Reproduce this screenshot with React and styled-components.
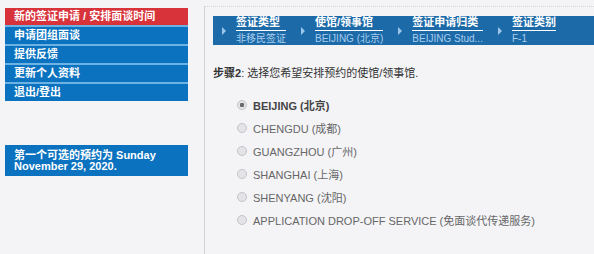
import React from 'react'
import styled, { createGlobalStyle } from 'styled-components'

const menu = [
  '新的签证申请 / 安排面谈时间',
  '申请团组面谈',
  '提供反馈',
  '更新个人资料',
  '退出/登出',
]

const crumbs = [
  { label: '签证类型', value: '非移民签证' },
  { label: '使馆/领事馆', value: 'BEIJING (北京)' },
  { label: '签证申请归类', value: 'BEIJING Stud...' },
  { label: '签证类别', value: 'F-1' },
]

const posts = [
  'BEIJING (北京)',
  'CHENGDU (成都)',
  'GUANGZHOU (广州)',
  'SHANGHAI (上海)',
  'SHENYANG (沈阳)',
  'APPLICATION DROP-OFF SERVICE (免面谈代传递服务)',
]

function App() {
  return (
    <>
      <GlobalStyle />
      <SCPage>
        <SCSidebar>
          <SCMenu>
            {menu.map((m, i) => (
              <SCMenuItem key={m} active={i === 0}>{m}</SCMenuItem>
            ))}
          </SCMenu>
          <SCNotice>第一个可选的预约为 Sunday<br />November 29, 2020.</SCNotice>
        </SCSidebar>

        <SCPanel>
          <SCCrumbBar>
            {crumbs.map((c) => (
              <SCCrumb key={c.label}>
                <SCArrow />
                <SCCrumbText>
                  <SCCrumbLabel>{c.label}</SCCrumbLabel>
                  <SCCrumbValue>{c.value}</SCCrumbValue>
                </SCCrumbText>
              </SCCrumb>
            ))}
          </SCCrumbBar>

          <SCStep><b>步骤2</b>: 选择您希望安排预约的使馆/领事馆.</SCStep>

          <SCRadioList>
            {posts.map((p, i) => (
              <SCRadioRow key={p} checked={i === 0}>
                <SCRadio checked={i === 0} />
                {p}
              </SCRadioRow>
            ))}
          </SCRadioList>
        </SCPanel>
      </SCPage>
    </>
  )
}

export default App

const GlobalStyle = createGlobalStyle`
  html, body {
    margin: 0;
    background: #f4f4f7;
    font-family: 'Liberation Sans', 'Noto Sans CJK SC', sans-serif;
  }
`

const SCPage = styled.div`
  display: flex;
  align-items: flex-start;
  gap: 16px;
  padding-left: 5px;
  height: 254px;
  overflow: hidden;
`

const SCSidebar = styled.div`
  width: 183px;
  flex-shrink: 0;
  margin-top: 8px;
  display: flex;
  flex-direction: column;
  gap: 44px;
`

const SCMenu = styled.div`
  display: flex;
  flex-direction: column;
  gap: 2px;
  background: #6cb3e4;
`

const SCMenuItem = styled.div`
  height: 17px;
  line-height: 17px;
  padding-left: 9px;
  background: ${(props) => props.active ? '#d8333b' : '#0b72c0'};
  color: #ffffff;
  font-size: 11px;
  font-weight: bold;
`

const SCNotice = styled.div`
  background: #0b72c0;
  color: #ffffff;
  font-size: 11px;
  font-weight: bold;
  line-height: 11px;
  padding: 5px 9px 5px;
  height: 21px;
`

const SCPanel = styled.div`
  flex: 1;
  margin-top: 6px;
  height: 260px;
  border-left: 1px solid #d2d2d6;
  border-top: 1px dotted #d6d6da;
  padding: 9px 0 0 8px;
`

const SCCrumbBar = styled.div`
  display: flex;
  align-items: center;
  height: 29px;
  background: #1c6aa7;
`

const SCCrumb = styled.div`
  display: flex;
  align-items: center;
  gap: 10px;
  padding: 0 6px 0 9px;
`

const SCArrow = styled.span`
  width: 0;
  height: 0;
  border-top: 4px solid transparent;
  border-bottom: 4px solid transparent;
  border-left: 4px solid #9cc6ea;
`

const SCCrumbText = styled.div`
  display: flex;
  flex-direction: column;
  white-space: nowrap;
`

const SCCrumbLabel = styled.span`
  color: #ffffff;
  font-size: 11px;
  font-weight: bold;
  line-height: 13px;
  padding-bottom: 1px;
  border-bottom: 1px solid #ffffff;
`

const SCCrumbValue = styled.span`
  color: #a8cdef;
  font-size: 10px;
  line-height: 13px;
  padding-top: 1px;
`

const SCStep = styled.div`
  margin-top: 22px;
  font-size: 11px;
  color: #333333;
  line-height: 13px;
`

const SCRadioList = styled.div`
  margin-top: 18px;
  padding-left: 24px;
  display: flex;
  flex-direction: column;
  gap: 10px;
`

const SCRadioRow = styled.div`
  display: flex;
  align-items: center;
  gap: 6px;
  height: 13px;
  font-size: 11px;
  color: ${(props) => props.checked ? '#444444' : '#666666'};
  font-weight: ${(props) => props.checked ? 'bold' : 'normal'};
`

const SCRadio = styled.span`
  width: 8px;
  height: 8px;
  border-radius: 50%;
  border: 1px solid #c4c4c8;
  background: ${(props) => props.checked
    ? 'radial-gradient(circle, #6a6a6a 0 2px, #e4e4e8 2.5px)'
    : '#e4e4e8'};
`
